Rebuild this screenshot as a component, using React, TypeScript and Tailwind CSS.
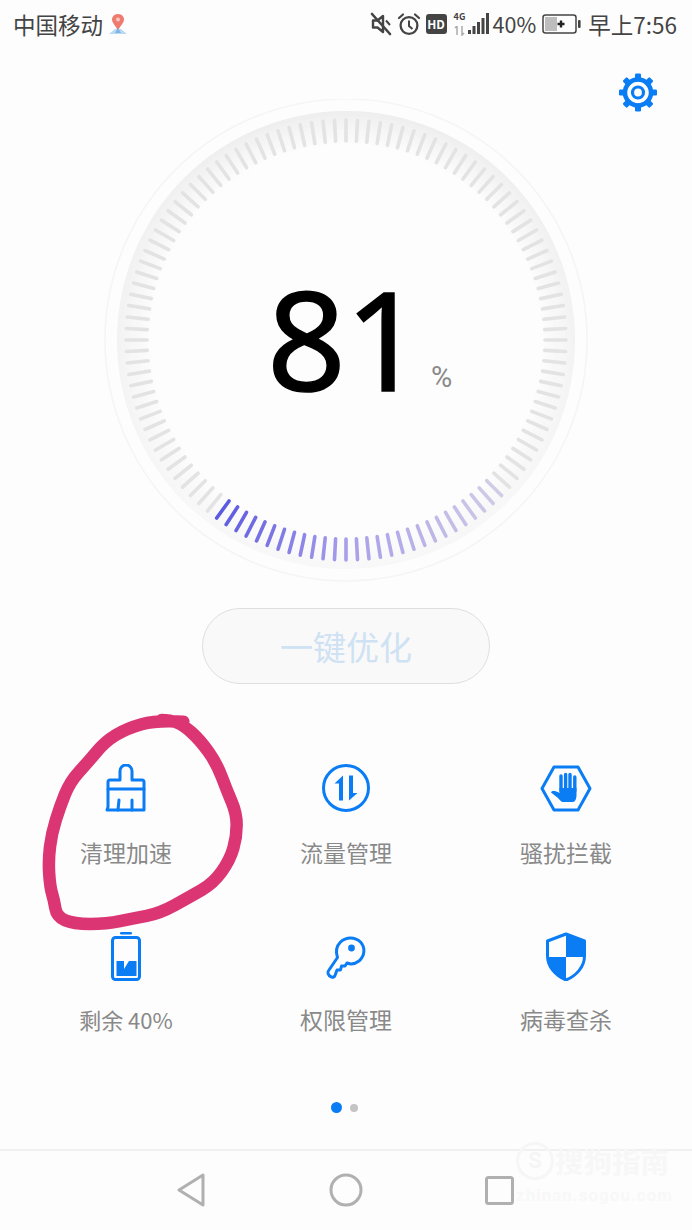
import React from "react";

const BLUE = "#0a7df5";

function lerp(a: number[], b: number[], t: number) {
  return `rgb(${a.map((v, i) => Math.round(v + (b[i] - v) * t)).join(",")})`;
}

function tickColor(a: number) {
  if (a < -36 || a > 45) return "#e3e3e3";
  const s = [92, 90, 224];
  const m = [168, 158, 234];
  const e = [208, 204, 230];
  if (a <= 0) return lerp(s, m, (a + 36) / 36);
  return lerp(m, e, a / 45);
}

function Gauge() {
  const ticks = [];
  for (let i = 0; i < 120; i++) {
    const a = i * 3 > 180 ? i * 3 - 360 : i * 3;
    const rad = (a * Math.PI) / 180;
    const s = Math.sin(rad);
    const c = Math.cos(rad);
    ticks.push(
      <line
        key={i}
        x1={243 + s * 199}
        y1={241 + c * 199}
        x2={243 + s * 220}
        y2={241 + c * 220}
        stroke={tickColor(a)}
        strokeWidth={3.6}
        strokeLinecap="round"
      />
    );
  }
  return (
    <svg width="486" height="484" viewBox="0 0 486 484" className="absolute left-0 top-0">
      <defs>
        <radialGradient id="band" cx="50%" cy="50%" r="50%">
          <stop offset="85%" stopColor="#ededed" stopOpacity="0" />
          <stop offset="100%" stopColor="#ededed" stopOpacity="1" />
        </radialGradient>
        <linearGradient id="fade" x1="0" y1="0" x2="0" y2="1">
          <stop offset="0%" stopColor="#fff" />
          <stop offset="50%" stopColor="#aaa" />
          <stop offset="100%" stopColor="#444" />
        </linearGradient>
        <mask id="m" maskUnits="userSpaceOnUse" x="0" y="0" width="486" height="484">
          <rect width="486" height="484" fill="url(#fade)" />
        </mask>
      </defs>
      <circle cx="243" cy="241" r="241" fill="none" stroke="#f5f5f5" strokeWidth="1.6" />
      <circle cx="243" cy="241" r="229" fill="url(#band)" mask="url(#m)" />
      {ticks}
    </svg>
  );
}

function Gear() {
  const teeth = [];
  for (let i = 0; i < 8; i++) {
    teeth.push(
      <rect key={i} x="16" y="0.5" width="6" height="8" rx="1.2" fill={BLUE} transform={`rotate(${i * 45} 19 19.5)`} />
    );
  }
  return (
    <svg width="38" height="39" viewBox="0 0 38 39">
      {teeth}
      <circle cx="19" cy="19.5" r="13" fill="none" stroke={BLUE} strokeWidth="4.5" />
      <circle cx="19" cy="19.5" r="5.5" fill="none" stroke={BLUE} strokeWidth="3.2" />
    </svg>
  );
}

function Brush() {
  return (
    <svg width="50" height="50" viewBox="0 0 50 50" fill="none" stroke={BLUE} strokeWidth="3" strokeLinejoin="round" strokeLinecap="round">
      <path d="M19 16V7a6 6 0 0 1 12 0v9h10a2 2 0 0 1 2 2v28H6l1-3V18a2 2 0 0 1 2-2z" />
      <path d="M7 25H43" />
      <path d="M18 36l-1 10M31 36V46" />
    </svg>
  );
}

function Arrows() {
  return (
    <svg width="50" height="50" viewBox="0 0 50 50" fill="none">
      <circle cx="25" cy="24" r="22.5" stroke={BLUE} strokeWidth="3" />
      <path d="M22 11.5V36.5H18V19.5H13.5Z" fill={BLUE} />
      <path d="M28 11.5H32V29H36.5L28 36.5Z" fill={BLUE} />
    </svg>
  );
}

function Hex() {
  return (
    <svg width="52" height="50" viewBox="0 0 52 50" fill="none">
      <path d="M14 3H38L50 24.5L38 46H14L2 24.5Z" stroke={BLUE} strokeWidth="3" strokeLinejoin="round" />
      <path d="M21 12V27M25.6 10.5V27M30 10.5V27M34.8 13V27" stroke={BLUE} strokeWidth="3.4" strokeLinecap="round" />
      <path d="M19.5 24H36.5V31C36.5 35 35 38 33 38H23C21 38 20 36 18 34L11 28.5C12 26.5 15 26.5 19.5 29Z" fill={BLUE} />
    </svg>
  );
}

function Battery() {
  return (
    <svg width="34" height="50" viewBox="0 0 34 50" fill="none">
      <rect x="11" y="1" width="12" height="2.6" rx="1.3" fill={BLUE} />
      <rect x="3.5" y="6.5" width="27" height="42" rx="3" stroke={BLUE} strokeWidth="3" />
      <path d="M7.5 30H15V38L20 30H27.5V45H7.5Z" fill={BLUE} />
    </svg>
  );
}

function Key() {
  return (
    <svg width="44" height="50" viewBox="0 0 44 50" fill="none">
      <path
        d="M13.5 26.5C11.5 20.5 12.5 15 16.5 11C22 5.5 31 5.5 36.5 11C41.5 16.5 41 25 35 30C31 33 26.5 33.5 23 32L21 35H17.5L16.5 39H13L11 44.5C10.5 46 9 46.5 7.5 46C6 45.5 4.5 44 4 42.5C3.5 41 4 40 5 39Z"
        stroke={BLUE}
        strokeWidth="3"
        strokeLinejoin="round"
      />
      <circle cx="27.5" cy="17" r="3.4" fill={BLUE} />
    </svg>
  );
}

function Shield() {
  return (
    <svg width="44" height="50" viewBox="0 0 44 50" fill="none">
      <path d="M22 3L40.5 10V25C40.5 36 32 45 22 49C12 45 3.5 36 3.5 25V10Z" fill="#fdfdfd" stroke={BLUE} strokeWidth="3" strokeLinejoin="round" />
      <path d="M22 3L40.5 10V26H22Z" fill={BLUE} />
      <path d="M22 26V49C12 45 3.5 36 3.5 26Z" fill={BLUE} />
    </svg>
  );
}

function StatusIcons() {
  const c = "#444444";
  return (
    <div className="flex items-center">
      <svg width="22" height="24" viewBox="0 0 22 24" fill="none">
        <path d="M3 8.5H7.5L13 4V20L7.5 15.5H3Z" fill="none" stroke={c} strokeWidth="2.4" strokeLinejoin="round" />
        <path d="M2 2L20 22" stroke={c} strokeWidth="2.6" strokeLinecap="round" />
        <path d="M16 8.5L20 13" stroke={c} strokeWidth="2" />
      </svg>
      <svg width="24" height="24" viewBox="0 0 24 24" fill="none" className="ml-[5px]">
        <circle cx="12" cy="13.5" r="8.4" stroke={c} strokeWidth="2.3" />
        <path d="M12 8.5V14L15.5 17" stroke={c} strokeWidth="2" />
        <path d="M2 6L6 2.5M22 6L18 2.5" stroke={c} strokeWidth="2.2" strokeLinecap="round" />
      </svg>
      <span className="ml-[5px] flex h-[20px] w-[21px] items-center justify-center rounded-[3px] bg-[#444444] text-[12px] font-bold leading-none text-white">
        HD
      </span>
      <span className="relative ml-[7px] h-[24px] w-[12px]">
        <span className="absolute left-0 top-0 text-[9px] font-bold leading-[10px] text-[#444444]">4G</span>
        <svg width="11" height="10" viewBox="0 0 11 10" className="absolute left-0 top-[14px]">
          <path d="M3 0V9M1 2L3 0M8 0V9L10 7" stroke="#aaaaaa" strokeWidth="1.5" fill="none" />
        </svg>
      </span>
      <svg width="21" height="24" viewBox="0 0 21 24" className="ml-[2px]">
        <rect x="0" y="18" width="3" height="4" fill={c} />
        <rect x="4.5" y="14" width="3" height="8" fill={c} />
        <rect x="9" y="10" width="3" height="12" fill={c} />
        <rect x="13.5" y="6" width="3" height="16" fill={c} />
        <rect x="18" y="1" width="3" height="21" fill={c} />
      </svg>
      <span className="ml-[4px] text-[21.5px] leading-none text-[#444444]">40%</span>
      <svg width="39" height="20" viewBox="0 0 39 20" fill="none" className="ml-[6px]">
        <rect x="1" y="1" width="33" height="18" rx="2.5" stroke={c} strokeWidth="1.5" />
        <rect x="3" y="3" width="12" height="14" fill="#bdbdbd" />
        <rect x="36" y="6" width="2.6" height="8" rx="1" fill={c} />
        <path d="M19 6.5V13.5M15.5 10H22.5" stroke="#222" strokeWidth="2.4" />
      </svg>
      <span className="ml-[7px] text-[22.5px] leading-none text-[#444444]">早上7:56</span>
    </div>
  );
}

function Tool({ icon, label, small }: { icon: React.ReactNode; label: string; small?: boolean }) {
  return (
    <div className="flex h-[167px] flex-col items-center">
      <div className="flex h-[50px] items-center justify-center">{icon}</div>
      <span className={small ? "mt-[23px] text-[22px] leading-[30px] text-[#898989]" : "mt-[23px] text-[23px] leading-[30px] text-[#898989]"}>
        {label}
      </span>
    </div>
  );
}

function Scribble() {
  const pts = [
    [460, 65], [380, 60], [290, 85], [225, 125], [175, 185], [120, 245], [90, 320], [65, 400],
    [55, 480], [60, 560], [72, 600], [80, 650], [130, 672], [230, 672], [310, 655], [390, 640],
    [480, 590], [550, 550], [600, 480], [620, 410], [620, 340], [590, 270], [560, 190], [510, 120],
    [460, 75], [420, 60], [370, 60],
  ].map(([x, y]) => [30 + x / 3, 700 + y / 3]);
  let d = `M${pts[0][0]} ${pts[0][1]}`;
  for (let i = 1; i < pts.length - 1; i++) {
    const mx = (pts[i][0] + pts[i + 1][0]) / 2;
    const my = (pts[i][1] + pts[i + 1][1]) / 2;
    d += ` Q${pts[i][0]} ${pts[i][1]} ${mx} ${my}`;
  }
  return (
    <svg width="692" height="1230" viewBox="0 0 692 1230" className="pointer-events-none absolute left-0 top-0">
      <path d={d} fill="none" stroke="#dc3574" strokeWidth="12.5" strokeLinecap="round" strokeLinejoin="round" />
    </svg>
  );
}

export default function App() {
  return (
    <div
      className="relative flex h-[1230px] w-[692px] flex-col overflow-hidden bg-[#fdfdfd]"
      style={{ fontFamily: '"Noto Sans CJK SC", Roboto, sans-serif' }}
    >
      <div className="flex h-[48px] items-center justify-between pl-[13px] pr-[15px]">
        <div className="flex items-center">
          <span className="text-[22.5px] leading-none text-[#444444]">中国移动</span>
          <svg width="22" height="22" viewBox="0 0 22 22" className="ml-[4px]">
            <path d="M2 21L8 16H14L20 21Z" fill="#bcd9f2" />
            <path d="M11 1C7 1 5 4 5 6.5C5 10 9 13 11 18C13 13 17 10 17 6.5C17 4 15 1 11 1Z" fill="#ee7a70" />
            <circle cx="11" cy="6.5" r="2" fill="#f8c8c0" />
            <path d="M8 20L11 15L14 20Z" fill="#7fb4e8" />
          </svg>
        </div>
        <StatusIcons />
      </div>

      <div className="relative mx-auto mt-[51px] h-[484px] w-[486px]">
        <Gauge />
        <div className="absolute right-[-68px] top-[-26px]">
          <Gear />
        </div>
        <div className="absolute inset-0 flex items-center justify-center">
          <span
            className="ml-[-2px] mt-[-8px] text-[138px] leading-none tracking-[-1px] text-black [-webkit-text-stroke:1.5px_black]"
            style={{ fontFamily: '"Noto Sans", sans-serif' }}
          >
            81
          </span>
          <span
            className="absolute left-[328px] top-[263px] text-[29px] leading-[30px] text-[#8a8a8a]"
            style={{ fontFamily: "Roboto, sans-serif" }}
          >
            %
          </span>
        </div>
      </div>

      <div className="mx-auto mt-[25px] flex h-[76px] w-[288px] items-center justify-center rounded-[38px] border border-[#dfdfdf] bg-[#f9f9f9]">
        <span className="text-[33px] leading-none text-[#cfe2f4]">一键优化</span>
      </div>

      <div className="mt-[80px] grid grid-cols-3 px-[16px]">
        <Tool icon={<Brush />} label="清理加速" />
        <Tool icon={<Arrows />} label="流量管理" />
        <Tool icon={<Hex />} label="骚扰拦截" />
        <Tool icon={<Battery />} label="剩余 40%" small />
        <Tool icon={<Key />} label="权限管理" />
        <Tool icon={<Shield />} label="病毒查杀" />
      </div>

      <div className="mt-[4px] flex items-center justify-center gap-[8px] pr-[4px]">
        <span className="h-[11px] w-[11px] rounded-full bg-[#0a7df5]" />
        <span className="h-[8px] w-[8px] rounded-full bg-[#c4c4c4]" />
      </div>

      <div className="mt-[36px] flex h-[80px] items-center border-t-2 border-[#f0f0f0] pl-[177px]">
        <svg width="28" height="34" viewBox="0 0 28 34" fill="none">
          <path d="M26 2V32L2 17Z" stroke="#b0b0b0" strokeWidth="3" strokeLinejoin="round" />
        </svg>
        <svg width="34" height="34" viewBox="0 0 34 34" fill="none" className="ml-[124px]">
          <circle cx="17" cy="17" r="15" stroke="#b0b0b0" strokeWidth="3" />
        </svg>
        <svg width="29" height="29" viewBox="0 0 29 29" fill="none" className="ml-[122px]">
          <rect x="1.5" y="1.5" width="26" height="26" rx="2" stroke="#b0b0b0" strokeWidth="3" />
        </svg>
      </div>

      <Scribble />

      <div className="absolute left-[516px] top-[1142px] flex w-[156px] flex-col">
        <div className="flex items-center">
          <span
            className="flex h-[38px] w-[38px] items-center justify-center rounded-full border-[3px] border-[#f6f6f6] text-[22px] font-bold leading-none text-[#f5f5f5]"
            style={{ fontFamily: "Roboto, sans-serif" }}
          >
            S
          </span>
          <span className="ml-[1px] text-[28.5px] font-bold leading-none text-[#f7f7f7]">搜狗指南</span>
        </div>
        <span
          className="mt-[5px] text-[17px] font-bold leading-[20px] tracking-[1px] text-[#f8f8f8]"
          style={{ fontFamily: "Roboto, sans-serif" }}
        >
          zhinan.sogou.com
        </span>
      </div>
    </div>
  );
}
